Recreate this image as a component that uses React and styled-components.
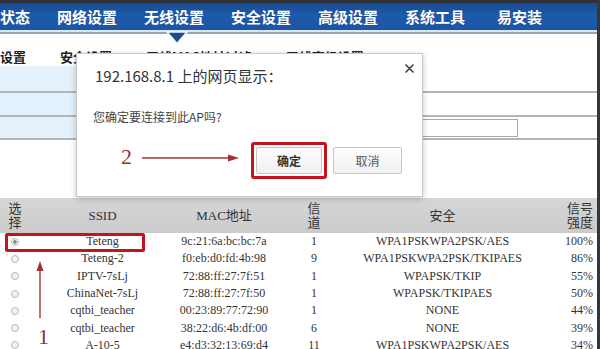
import React from "react";
import styled, { createGlobalStyle } from "styled-components";

const GlobalStyle = createGlobalStyle`
  html, body { margin: 0; padding: 0; background: #fff; overflow: hidden; }
  #root { width: 600px; height: 349px; }
`;

const Page = styled.div`
  position: relative;
  width: 600px;
  height: 349px;
  overflow: hidden;
  background: #fff;
  border-right: 3px solid #343638;
  box-sizing: border-box;
  display: flex;
  flex-direction: column;
  font-family: "Noto Sans CJK SC", "Noto Sans", sans-serif;
`;

const NavBar = styled.nav`
  display: flex;
  align-items: center;
  gap: 27px;
  height: 30px;
  box-sizing: border-box;
  border-top: 3px solid #2e3236;
  background: linear-gradient(#174a92, #1d5aab 45%, #1b56a5);
  flex-shrink: 0;
`;

const NavItem = styled.div`
  position: relative;
  color: #fff;
  font-size: 15px;
  font-weight: 700;
  line-height: 27px;
  white-space: nowrap;
  margin-left: ${(p) => p.$shift || 0}px;
  text-shadow: 0 0 1px rgba(0, 0, 0, 0.3);
`;

const Pointer = styled.svg`
  position: absolute;
  top: calc(100% + 1px);
  left: calc(50% + 3px);
  transform: translateX(-50%);
  z-index: 3;
`;

const NavRule = styled.div`
  height: 2px;
  background: #d6e7f6;
  border-bottom: 2px solid #98a4af;
  flex-shrink: 0;
`;

const SubNav = styled.div`
  display: flex;
  gap: 34px;
  height: 32px;
  padding-top: 15px;
  box-sizing: border-box;
  font-size: 13px;
  font-weight: 700;
  line-height: 16px;
  color: #222;
  white-space: nowrap;
  flex-shrink: 0;
`;

const FormRow = styled.div`
  display: grid;
  grid-template-columns: 190px 1fr;
  height: ${(p) => p.$h}px;
  box-sizing: border-box;
  border-bottom: 2px solid #b4b4b4;
  flex-shrink: 0;
`;

const FormLabel = styled.div`
  background: #e2f1fb;
`;

const FormValue = styled.div`
  display: flex;
  align-items: center;
  padding-left: 10px;
  background: #fff;
`;

const TextInput = styled.div`
  width: 318px;
  height: 18px;
  box-sizing: border-box;
  border: 1px solid #a8a8a8;
  background: #fff;
`;

const ScanTable = styled.div`
  margin-top: 58px;
  display: grid;
  grid-template-columns: 30px 145px 98px 82px 175px 1fr;
  font-family: "Liberation Serif", "Noto Sans CJK SC", serif;
  color: #333;
  flex-shrink: 0;
`;

const HeadCell = styled.div`
  height: 35px;
  background: linear-gradient(#d6d6d6, #cbcbcb);
  display: flex;
  align-items: center;
  justify-content: ${(p) => (p.$right ? "flex-end" : "center")};
  padding-right: ${(p) => (p.$right ? "4px" : "0")};
  text-align: center;
  font-size: 13px;
  line-height: 14px;
  color: #333;
`;

const Cell = styled.div`
  height: 17.3px;
  display: flex;
  align-items: center;
  justify-content: ${(p) => (p.$right ? "flex-end" : "center")};
  padding-right: ${(p) => (p.$right ? "4px" : "0")};
  font-size: 12px;
  white-space: nowrap;
`;

const Radio = styled.span`
  width: 8px;
  height: 8px;
  border-radius: 50%;
  box-sizing: border-box;
  border: 1px solid #b8b8b8;
  background: ${(p) =>
    p.$checked ? "radial-gradient(#8a8a8a 0 1.5px, #f2f2f2 2px)" : "#f1f1f1"};
`;

const Dialog = styled.div`
  position: absolute;
  left: 76px;
  top: 53px;
  width: 347px;
  height: 144px;
  box-sizing: border-box;
  background: #fff;
  border: 1px solid #c9c9c9;
  box-shadow: 0 2px 6px rgba(0, 0, 0, 0.22);
  z-index: 5;
  display: flex;
  flex-direction: column;
  padding: 13px 20px 0 16px;
`;

const DialogTitle = styled.div`
  font-size: 15px;
  line-height: 18px;
  color: #333;
  padding-left: 2px;
`;

const CloseButton = styled.svg`
  position: absolute;
  right: 8px;
  top: 10px;
`;

const DialogMessage = styled.div`
  margin-top: 24px;
  font-size: 12px;
  line-height: 16px;
  color: #444;
`;

const ButtonRow = styled.div`
  margin-top: 17px;
  display: flex;
  justify-content: flex-end;
  align-items: center;
  gap: 6px;
`;

const HighlightFrame = styled.div`
  padding: 2px;
  border: 3px solid #c4141d;
  border-radius: 3px;
`;

const Button = styled.button`
  width: ${(p) => p.$w}px;
  height: 27px;
  box-sizing: border-box;
  border: 1px solid #c6c6c6;
  border-radius: 2px;
  background: linear-gradient(#fdfdfd, #f1f1f1);
  font-family: "Noto Sans CJK SC", sans-serif;
  font-size: 12px;
  font-weight: ${(p) => (p.$primary ? 700 : 400)};
  color: ${(p) => (p.$primary ? "#333" : "#555")};
  padding: 0;
`;

const RowHighlight = styled.div`
  position: absolute;
  left: 5px;
  top: 233px;
  width: 140px;
  height: 19px;
  box-sizing: border-box;
  border: 3px solid #c4141d;
  border-radius: 2px;
  z-index: 4;
`;

const StepNumber = styled.div`
  position: absolute;
  left: ${(p) => p.$x}px;
  top: ${(p) => p.$y}px;
  font-family: "Liberation Serif", serif;
  font-size: 22px;
  line-height: 22px;
  color: #9b2b2f;
  z-index: 6;
`;

const ArrowSvg = styled.svg`
  position: absolute;
  left: ${(p) => p.$x}px;
  top: ${(p) => p.$y}px;
  z-index: 6;
`;

const navItems = ["状态", "网络设置", "无线设置", "安全设置", "高级设置", "系统工具", "易安装"];
const subItems = ["设置", "安全设置", "无线MAC地址过滤", "无线高级设置"];

const networks = [
  ["Teteng", "9c:21:6a:bc:bc:7a", "1", "WPA1PSKWPA2PSK/AES", "100%"],
  ["Teteng-2", "f0:eb:d0:fd:4b:98", "9", "WPA1PSKWPA2PSK/TKIPAES", "86%"],
  ["IPTV-7sLj", "72:88:ff:27:7f:51", "1", "WPAPSK/TKIP", "55%"],
  ["ChinaNet-7sLj", "72:88:ff:27:7f:50", "1", "WPAPSK/TKIPAES", "50%"],
  ["cqtbi_teacher", "00:23:89:77:72:90", "1", "NONE", "44%"],
  ["cqtbi_teacher", "38:22:d6:4b:df:00", "6", "NONE", "39%"],
  ["A-10-5", "e4:d3:32:13:69:d4", "11", "WPA1PSKWPA2PSK/AES", "34%"],
];

export default function App() {
  return (
    <>
      <GlobalStyle />
      <Page>
        <NavBar>
          {navItems.map((n, i) => (
            <NavItem key={n} $shift={i === navItems.length - 1 ? 5 : 0}>
              {n}
              {n === "无线设置" && (
                <Pointer width="22" height="14" viewBox="0 0 22 14">
                  <polygon points="1,1 21,1 11,12.5" fill="#1c4d8a" stroke="#eef5fb" strokeWidth="1.6" strokeLinejoin="round" />
                </Pointer>
              )}
            </NavItem>
          ))}
        </NavBar>
        <NavRule />
        <SubNav>
          {subItems.map((s) => (
            <span key={s}>{s}</span>
          ))}
        </SubNav>
        <FormRow $h={27}>
          <FormLabel />
          <FormValue />
        </FormRow>
        <FormRow $h={24}>
          <FormLabel />
          <FormValue />
        </FormRow>
        <FormRow $h={23}>
          <FormLabel />
          <FormValue>
            <TextInput />
          </FormValue>
        </FormRow>

        <ScanTable>
          <HeadCell>选<br />择</HeadCell>
          <HeadCell>SSID</HeadCell>
          <HeadCell>MAC地址</HeadCell>
          <HeadCell>信<br />道</HeadCell>
          <HeadCell>安全</HeadCell>
          <HeadCell $right>信号<br />强度</HeadCell>
          {networks.map((r, i) => (
            <React.Fragment key={i}>
              <Cell><Radio $checked={i === 0} /></Cell>
              <Cell>{r[0]}</Cell>
              <Cell>{r[1]}</Cell>
              <Cell>{r[2]}</Cell>
              <Cell>{r[3]}</Cell>
              <Cell $right>{r[4]}</Cell>
            </React.Fragment>
          ))}
        </ScanTable>

        <Dialog>
          <DialogTitle>192.168.8.1 上的网页显示：</DialogTitle>
          <CloseButton width="9" height="9" viewBox="0 0 9 9">
            <path d="M1 1 L8 8 M8 1 L1 8" stroke="#444" strokeWidth="1.7" strokeLinecap="round" />
          </CloseButton>
          <DialogMessage>您确定要连接到此AP吗?</DialogMessage>
          <ButtonRow>
            <HighlightFrame>
              <Button $w={66} $primary>确定</Button>
            </HighlightFrame>
            <Button $w={69}>取消</Button>
          </ButtonRow>
        </Dialog>

        <StepNumber $x={121} $y={146}>2</StepNumber>
        <ArrowSvg $x={142} $y={153} width="100" height="10" viewBox="0 0 100 10">
          <line x1="0" y1="5" x2="90" y2="5" stroke="#a33236" strokeWidth="1.4" />
          <polygon points="86,1.5 97,5 86,8.5" fill="#a33236" />
        </ArrowSvg>

        <RowHighlight />
        <ArrowSvg $x={34} $y={261} width="12" height="60" viewBox="0 0 12 60">
          <line x1="6" y1="7" x2="6" y2="57" stroke="#a33236" strokeWidth="1.4" />
          <polygon points="6,0 2.5,10 9.5,10" fill="#a33236" />
        </ArrowSvg>
        <StepNumber $x={38} $y={326}>1</StepNumber>
      </Page>
    </>
  );
}
